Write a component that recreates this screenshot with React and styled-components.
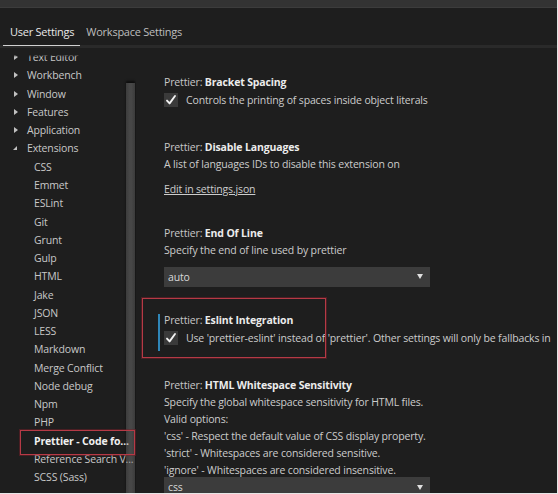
import React from "react";
import styled, { createGlobalStyle } from "styled-components";

const Global = createGlobalStyle`
  html, body { margin: 0; padding: 0; background: #1e1e1e; overflow: hidden; }
  * { box-sizing: border-box; }
`;

const FONT = `"Open Sans", "Noto Sans", sans-serif`;

const Root = styled.div`
  width: 558px;
  height: 494px;
  background: #1e1e1e;
  display: flex;
  flex-direction: column;
  font-family: ${FONT};
  font-size: 10.5px;
  letter-spacing: -0.15px;
  color: #cccccc;
  overflow: hidden;
  border-right: 1px solid #e6e6e6;
  border-bottom: 1px solid #e6e6e6;
`;

const TopStrip = styled.div`
  height: 8px;
  flex: none;
  background: #333333;
  border-bottom: 1px solid #3c3c3c;
`;

const TabBar = styled.div`
  height: 40px;
  flex: none;
  display: flex;
  align-items: flex-end;
  padding-left: 3px;
  border-bottom: 3px solid #2a2a2a;
`;

const Tab = styled.div`
  height: 22px;
  padding: 0 6px 0 ${(p) => (p.$active ? "7px" : "6px")};
  display: flex;
  align-items: flex-start;
  font-size: 11px;
  letter-spacing: -0.25px;
  color: ${(p) => (p.$active ? "#e8e8e8" : "#bdbdbd")};
  border-bottom: 1px solid ${(p) => (p.$active ? "#d0d0d0" : "transparent")};
  margin-bottom: -1px;
`;

const Body = styled.div`
  flex: 1;
  display: flex;
  min-height: 0;
`;

const Sidebar = styled.div`
  width: 136px;
  flex: none;
  position: relative;
  overflow: hidden;
  &::before {
    content: "";
    position: absolute;
    left: 0;
    right: 0;
    top: 0;
    height: 9px;
    background: linear-gradient(#1e1e1e 75%, rgba(30, 30, 30, 0));
    z-index: 2;
  }
`;

const Tree = styled.div`
  display: flex;
  flex-direction: column;
`;

const Row = styled.div`
  height: 18.27px;
  display: flex;
  align-items: center;
  position: relative;
  white-space: nowrap;
  padding-left: ${(p) => (p.$level === 2 ? "34px" : "12px")};
  font-weight: ${(p) => (p.$active ? 700 : 400)};
  color: ${(p) => (p.$active ? "#f0f0f0" : "#c8c8c8")};
`;

const Twisty = styled.span`
  width: 15px;
  flex: none;
  display: flex;
  align-items: center;
  &::before {
    content: "";
    display: block;
    width: 0;
    height: 0;
    ${(p) =>
      p.$open
        ? `border-left: 4px solid transparent; border-bottom: 4px solid #c0c0c0; margin-left: 1px;`
        : `border-top: 3px solid transparent; border-bottom: 3px solid transparent; border-left: 4px solid #c0c0c0; margin-left: 2px;`}
  }
`;

const Scrollbar = styled.div`
  position: absolute;
  left: 126px;
  top: 35px;
  width: 9px;
  bottom: 0;
  background: linear-gradient(
    90deg,
    rgba(121, 121, 121, 0.33),
    rgba(121, 121, 121, 0.45) 40%,
    rgba(121, 121, 121, 0.45) 60%,
    rgba(121, 121, 121, 0.33)
  );
  box-shadow: 0 -2px 2px rgba(0, 0, 0, 0.6);
  z-index: 3;
`;

const Annot = styled.div`
  position: absolute;
  border: 1px solid #b63a46;
  box-shadow: 0 0 0 1px rgba(120, 30, 40, 0.5);
  pointer-events: none;
  z-index: 4;
`;

const Pane = styled.div`
  flex: 1;
  min-width: 0;
  padding-left: 28px;
  overflow: hidden;
  white-space: nowrap;
`;

const Item = styled.div`
  position: relative;
  margin-top: ${(p) => p.$mt}px;
  display: flex;
  flex-direction: column;
  align-items: flex-start;
`;

const Title = styled.div`
  line-height: 17px;
  height: 17px;
  color: #c8c8c8;
  b {
    color: #ececec;
    font-weight: 700;
  }
`;

const Desc = styled.div`
  line-height: 17px;
  height: 17px;
`;

const CheckRow = styled.div`
  height: 18px;
  display: flex;
  align-items: center;
  gap: 8px;
`;

const Box = styled.span`
  width: 14px;
  height: 14px;
  flex: none;
  background: #3a3a3a;
  display: flex;
  align-items: center;
  justify-content: center;
`;

const Link = styled.a`
  margin-top: 8px;
  line-height: 17px;
  color: #cccccc;
  text-decoration: underline;
`;

const Select = styled.div`
  margin-top: ${(p) => p.$mt ?? 8}px;
  width: 266px;
  height: 20px;
  background: #3c3c3c;
  display: flex;
  align-items: center;
  justify-content: space-between;
  padding: 0 7px 0 4px;
  color: #d8d8d8;
`;

const Caret = styled.span`
  width: 0;
  height: 0;
  border-left: 3px solid transparent;
  border-right: 3px solid transparent;
  border-top: 5px solid #e0e0e0;
`;

const Accent = styled.div`
  position: absolute;
  left: -6px;
  top: 1.5px;
  width: 2px;
  height: 37px;
  background: #2f86b8;
`;

const Check = () => (
  <Box>
    <svg width="12" height="12" viewBox="0 0 12 12">
      <path d="M2 6.6 L4.6 9.4 L10 2" fill="none" stroke="#f2f2f2" strokeWidth="1.9" strokeLinecap="round" strokeLinejoin="round" />
    </svg>
  </Box>
);

const tree = [
  { t: "Text Editor", l: 1 },
  { t: "Workbench", l: 1 },
  { t: "Window", l: 1 },
  { t: "Features", l: 1 },
  { t: "Application", l: 1 },
  { t: "Extensions", l: 1, open: true },
  { t: "CSS", l: 2 },
  { t: "Emmet", l: 2 },
  { t: "ESLint", l: 2 },
  { t: "Git", l: 2 },
  { t: "Grunt", l: 2 },
  { t: "Gulp", l: 2 },
  { t: "HTML", l: 2 },
  { t: "Jake", l: 2 },
  { t: "JSON", l: 2 },
  { t: "LESS", l: 2 },
  { t: "Markdown", l: 2 },
  { t: "Merge Conflict", l: 2 },
  { t: "Node debug", l: 2 },
  { t: "Npm", l: 2 },
  { t: "PHP", l: 2 },
  { t: "Prettier - Code fo...", l: 2, active: true, mark: true },
  { t: "Reference Search V...", l: 2 },
  { t: "SCSS (Sass)", l: 2 },
];

export default function App() {
  return (
    <Root>
      <Global />
      <TopStrip />
      <TabBar>
        <Tab $active>User Settings</Tab>
        <Tab>Workspace Settings</Tab>
      </TabBar>
      <Body>
        <Sidebar>
          <Tree>
            {tree.map((r) => (
              <Row key={r.t} $level={r.l} $active={r.active}>
                {r.l === 1 && <Twisty $open={r.open} />}
                {r.t}
                {r.mark && <Annot style={{ left: 20, top: -2, width: 115, height: 25 }} />}
              </Row>
            ))}
          </Tree>
          <Scrollbar />
        </Sidebar>
        <Pane>
          <Item $mt={25.5}>
            <Title>
              Prettier: <b>Bracket Spacing</b>
            </Title>
            <CheckRow>
              <Check />
              Controls the printing of spaces inside object literals
            </CheckRow>
          </Item>
          <Item $mt={30}>
            <Title>
              Prettier: <b>Disable Languages</b>
            </Title>
            <Desc>A list of languages IDs to disable this extension on</Desc>
            <Link>Edit in settings.json</Link>
          </Item>
          <Item $mt={27}>
            <Title>
              Prettier: <b>End Of Line</b>
            </Title>
            <Desc>Specify the end of line used by prettier</Desc>
            <Select>
              auto
              <Caret />
            </Select>
          </Item>
          <Item $mt={25.5}>
            <Annot style={{ left: -22, top: -14.5, width: 184, height: 60 }} />
            <Accent />
            <Title>
              Prettier: <b>Eslint Integration</b>
            </Title>
            <CheckRow>
              <Check />
              Use 'prettier-eslint' instead of 'prettier'. Other settings will only be fallbacks in
            </CheckRow>
          </Item>
          <Item $mt={30}>
            <Title>
              Prettier: <b>HTML Whitespace Sensitivity</b>
            </Title>
            <Desc>Specify the global whitespace sensitivity for HTML files.</Desc>
            <Desc>Valid options:</Desc>
            <Desc>'css' - Respect the default value of CSS display property.</Desc>
            <Desc>'strict' - Whitespaces are considered sensitive.</Desc>
            <Desc>'ignore' - Whitespaces are considered insensitive.</Desc>
            <Select $mt={-2}>
              css
              <Caret />
            </Select>
          </Item>
        </Pane>
      </Body>
    </Root>
  );
}
